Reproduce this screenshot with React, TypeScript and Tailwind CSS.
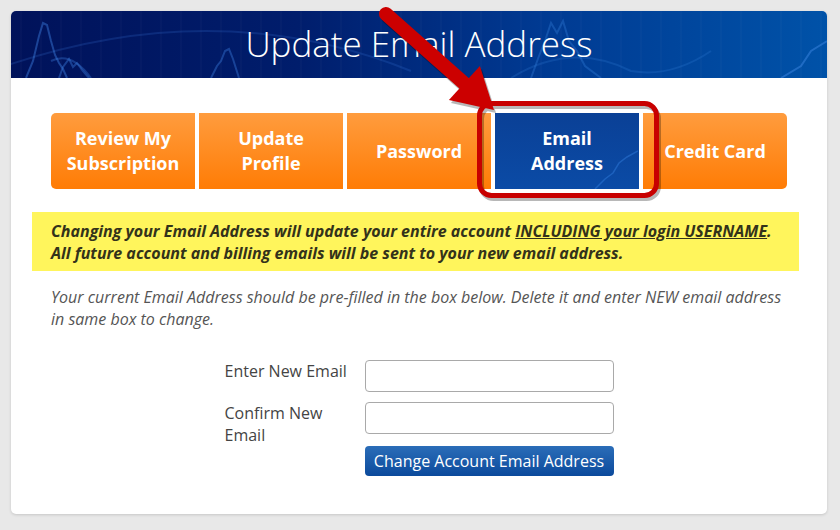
import React from "react";

const font = { fontFamily: '"Open Sans", "Liberation Sans", sans-serif' };

function HeaderDecor() {
  const lines = [] as React.ReactNode[];
  for (let x = 10; x < 820; x += 20) {
    lines.push(<line key={x} x1={x} y1={0} x2={x} y2={67} stroke="#ffffff" strokeOpacity={0.04} strokeWidth={1} />);
  }
  return (
    <svg className="absolute inset-0" width="816" height="67" viewBox="0 0 816 67">
      {lines}
      <path d="M-20 60 Q 200 -20 400 60" stroke="#3a7be0" strokeOpacity="0.2" strokeWidth="2" fill="none" />
      <path d="M15 67 L22 50 L28 25 L32 12 L36 14 L40 30 L44 44 L48 52 L52 58 L56 67" stroke="#3c7fe0" strokeOpacity="0.45" strokeWidth="2" fill="none" />
      <path d="M48 67 L52 56 L58 48 L62 56 L66 52 L72 60 L78 67" stroke="#3c7fe0" strokeOpacity="0.4" strokeWidth="2" fill="none" />
      <path d="M40 50 Q 60 40 80 67" stroke="#3c7fe0" strokeOpacity="0.35" strokeWidth="2" fill="none" />
      <path d="M200 67 L206 55 L210 50 L214 40 L218 38 L222 48 L228 67" stroke="#3c7fe0" strokeOpacity="0.4" strokeWidth="2" fill="none" />
      <path d="M520 67 L528 45 L534 30 L540 12 L546 22 L552 10 L558 30 L566 40 L574 55 L590 67" stroke="#3c8ae8" strokeOpacity="0.3" strokeWidth="2" fill="none" />
      <path d="M500 67 Q 560 30 620 60 Q 660 67 700 40" stroke="#3c8ae8" strokeOpacity="0.2" strokeWidth="2" fill="none" />
      <path d="M770 67 L790 55 L800 40 L808 35 L816 30" stroke="#4a94f0" strokeOpacity="0.4" strokeWidth="2" fill="none" />
    </svg>
  );
}

function Overlay() {
  return (
    <svg className="absolute inset-0 pointer-events-none" width="840" height="530" viewBox="0 0 840 530">
      <g transform="translate(2 3)" opacity="0.28">
        <rect x="479.5" y="103.5" width="177" height="92" rx="12" ry="12" fill="none" stroke="#000" strokeWidth="5" />
        <line x1="386" y1="14" x2="466" y2="85" stroke="#000" strokeWidth="14" strokeLinecap="round" />
        <polygon points="494,110 448.9,100.1 479.9,66.1" fill="#000" />
      </g>
      <rect x="479.5" y="103.5" width="177" height="92" rx="12" ry="12" fill="none" stroke="#c80000" strokeWidth="5" />
      <line x1="386" y1="14" x2="466" y2="85" stroke="#cc0000" strokeWidth="14" strokeLinecap="round" />
      <polygon points="494,110 448.9,100.1 479.9,66.1" fill="#cc0000" />
    </svg>
  );
}

const tabs = [
  { label: "Review My Subscription", active: false },
  { label: "Update Profile", active: false },
  { label: "Password", active: false },
  { label: "Email Address", active: true },
  { label: "Credit Card", active: false },
];

export default function App() {
  return (
    <div className="relative w-[840px] h-[530px] bg-[#e8e8e8] pt-[11px] pl-[11px] overflow-hidden" style={font}>
      <div className="w-[816px] h-[503px] bg-white rounded-[5px] shadow-[0_1px_3px_rgba(0,0,0,0.15)] flex flex-col">
        <div className="relative h-[67px] rounded-t-[5px] overflow-hidden bg-[linear-gradient(90deg,#00125a_0%,#001d6c_35%,#003a92_65%,#0052a8_100%)] flex items-center justify-center">
          <HeaderDecor />
          <h1 className="relative text-white text-[35px] font-light leading-none pb-[2px]">Update Email Address</h1>
        </div>

        <div className="px-[40px] pt-[35px] flex gap-[4px]">
          {tabs.map((t, i) => (
            <div
              key={t.label}
              className={
                "relative flex-1 h-[76px] flex items-center justify-center text-center text-white font-bold text-[18px] leading-[25px] px-4 overflow-hidden " +
                (t.active
                  ? "bg-[linear-gradient(180deg,#0a4096_0%,#0b4ba6_100%)] "
                  : "bg-[linear-gradient(180deg,#ff9c3e_0%,#ff7c05_100%)] ") +
                (i === 0 ? "rounded-l-[5px] " : "") +
                (i === tabs.length - 1 ? "rounded-r-[5px] " : "")
              }
            >
              {t.active && (
                <svg className="absolute inset-0" width="143" height="76" viewBox="0 0 143 76">
                  <path d="M100 76 L110 66 L118 60 L124 50 L132 44 L143 38" stroke="#3a86e8" strokeOpacity="0.4" strokeWidth="1.5" fill="none" />
                </svg>
              )}
              <span className="relative">{t.label}</span>
            </div>
          ))}
        </div>

        <div className="ml-[21px] mr-[28px] mt-[23px] h-[59px] bg-[#fff55c] pl-[19px] pt-[8px] text-[16px] leading-[22px] font-bold italic text-[#33321a]">
          <div>
            Changing your Email Address will update your entire account <span className="underline">INCLUDING your login USERNAME</span>.
          </div>
          <div>All future account and billing emails will be sent to your new email address.</div>
        </div>

        <p className="mx-[40px] mt-[15px] text-[16px] leading-[22px] italic text-[#555555]">
          Your current Email Address should be pre-filled in the box below. Delete it and enter NEW email address in same box to change.
        </p>

        <div className="mt-[30px] mx-auto w-[389px] flex flex-col">
          <div className="flex gap-[10px]">
            <label className="w-[130px] text-[16px] leading-[22px] text-[#444]">Enter New Email</label>
            <input className="w-[249px] h-[32px] border border-[#a9a9a9] rounded-[4px] bg-white" />
          </div>
          <div className="flex gap-[10px] mt-[10px]">
            <label className="w-[130px] text-[16px] leading-[22px] text-[#444]">Confirm New Email</label>
            <input className="w-[249px] h-[32px] border border-[#a9a9a9] rounded-[4px] bg-white" />
          </div>
          <div className="flex">
            <div className="w-[140px]" />
            <button className="w-[249px] h-[30px] rounded-[4px] bg-[linear-gradient(180deg,#2b6db8_0%,#0b4a9c_100%)] text-white text-[16px] leading-none">
              Change Account Email Address
            </button>
          </div>
        </div>
      </div>
      <Overlay />
    </div>
  );
}
